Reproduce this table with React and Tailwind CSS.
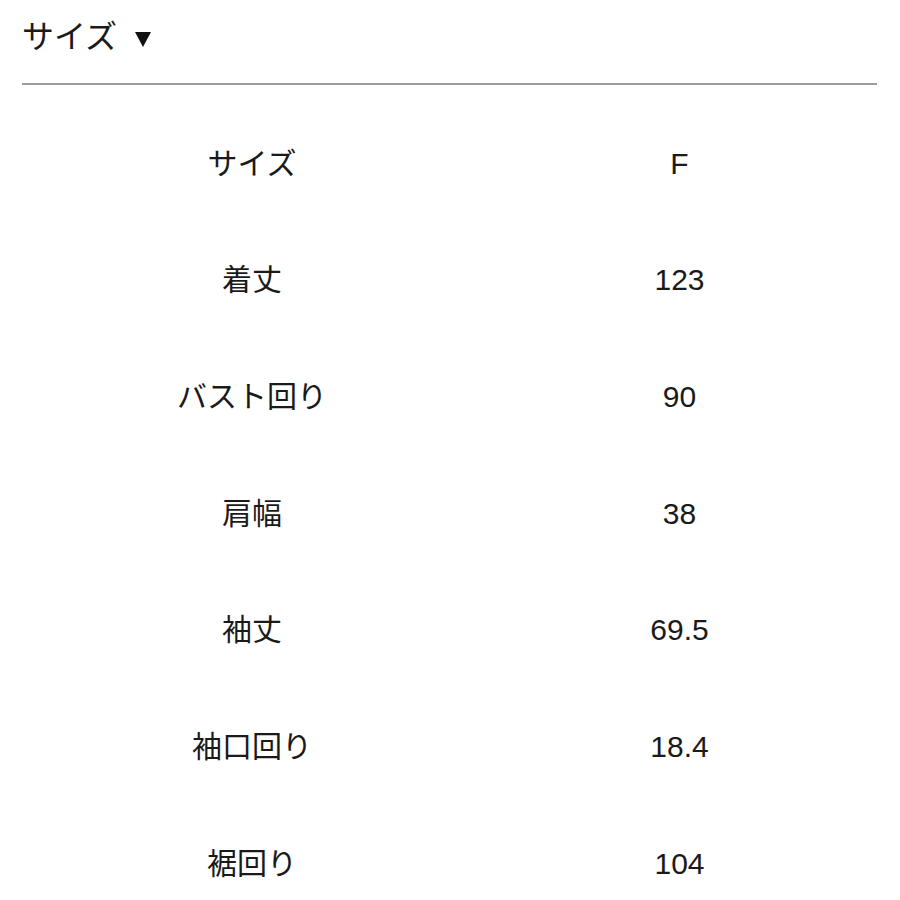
const ROWS = [
  ["サイズ", "F"],
  ["着丈", "123"],
  ["バスト回り", "90"],
  ["肩幅", "38"],
  ["袖丈", "69.5"],
  ["袖口回り", "18.4"],
  ["裾回り", "104"],
];

export default function App() {
  return (
    <div
      className="min-h-[900px] w-[900px] bg-white px-[22px] text-[#1a1a1a]"
      style={{ fontFamily: '"Liberation Sans", "Noto Sans CJK JP", sans-serif' }}
    >
      {/* 見出し */}
      <div className="flex h-[74px] items-center text-[32px] leading-none">
        <span>サイズ</span>
        <svg className="ml-[18px] mt-[4px]" width="16" height="15" viewBox="0 0 16 15">
          <path d="M0 0h16L8 15z" fill="#111" />
        </svg>
      </div>
      <div className="mt-[9px] h-[2px] w-[855px] bg-[#9c9c9c]" />

      {/* サイズ表 */}
      <div className="mt-[20px] grid grid-cols-[460px_395px]">
        {ROWS.map(([label, value]) => (
          <div key={label} className="contents">
            <div className="flex h-[116.67px] items-center justify-center text-[30px]">
              {label}
            </div>
            <div className="flex h-[116.67px] items-center justify-center text-[30px]">
              {value}
            </div>
          </div>
        ))}
      </div>
    </div>
  );
}
